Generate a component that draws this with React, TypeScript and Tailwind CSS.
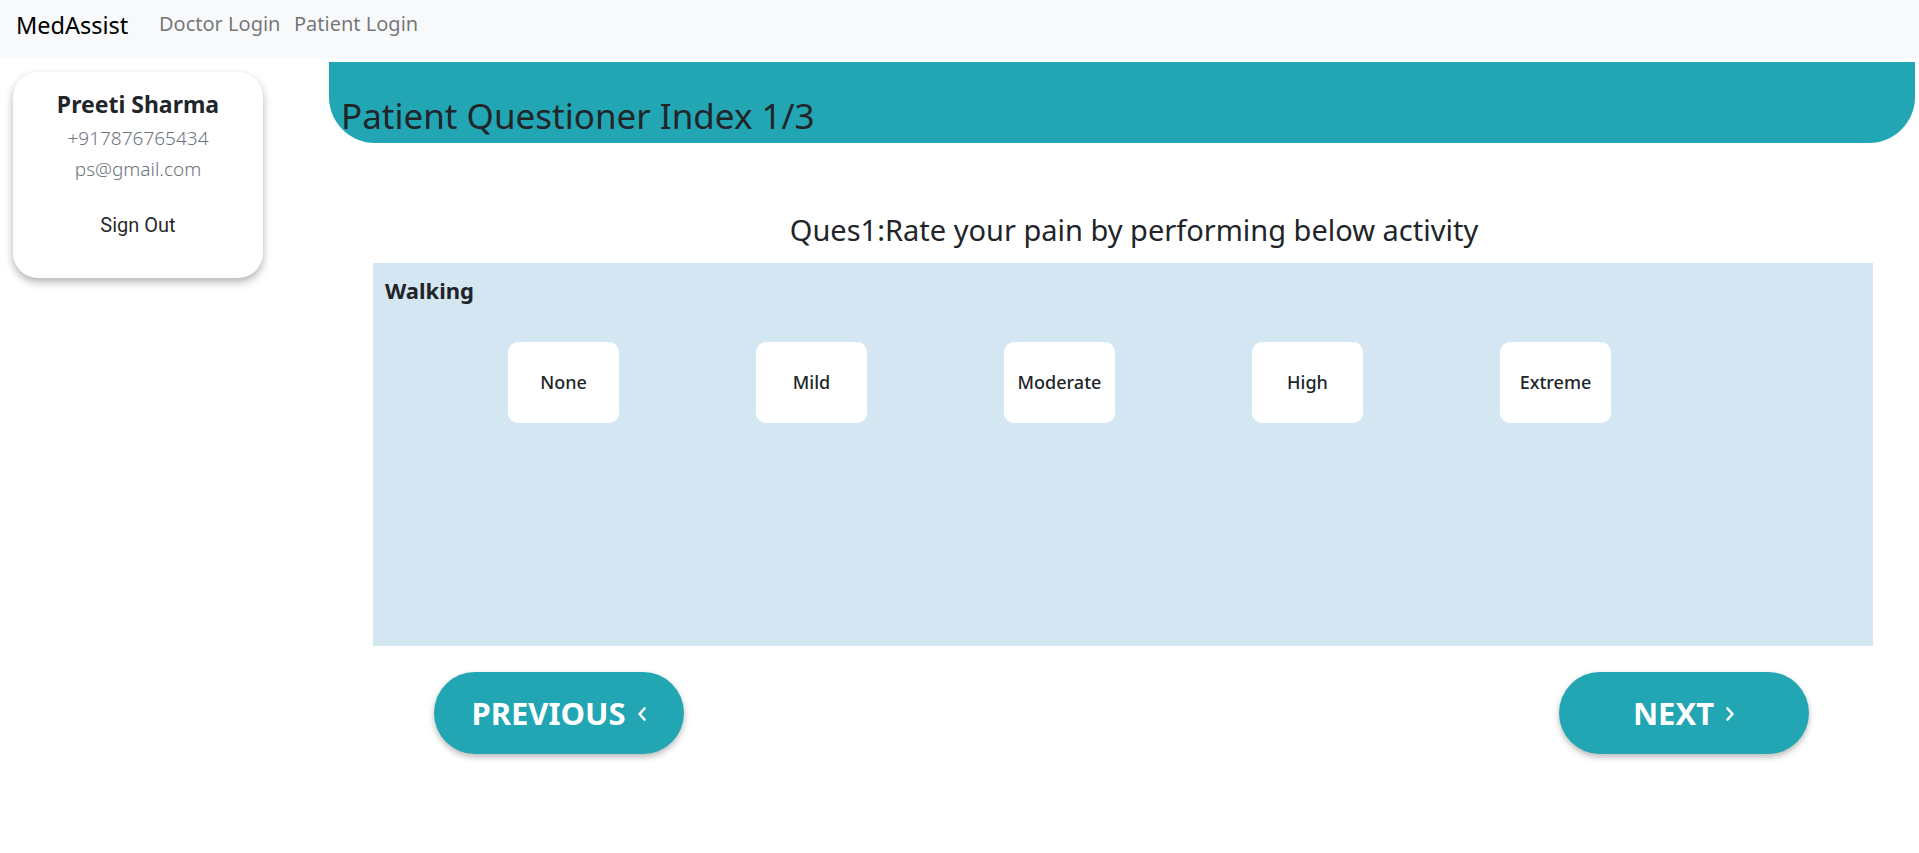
import React from "react";

const Chevron = ({ dir }: { dir: "left" | "right" }) => (
  <svg width="10" height="14" viewBox="0 0 10 14" fill="none" className="mt-[2px]">
    {dir === "left" ? (
      <polyline points="7.5,1.5 2.5,7 7.5,12.5" stroke="white" strokeWidth="2.6" strokeLinecap="round" strokeLinejoin="round" />
    ) : (
      <polyline points="2.5,1.5 7.5,7 2.5,12.5" stroke="white" strokeWidth="2.6" strokeLinecap="round" strokeLinejoin="round" />
    )}
  </svg>
);

const options = ["None", "Mild", "Moderate", "High", "Extreme"];

export default function App() {
  return (
    <div className="min-h-[853px] w-full bg-white font-['Noto_Sans',sans-serif] text-[#212529]">
      {/* Navbar */}
      <nav className="flex h-[58px] items-start bg-[#f8f9fa] pl-[16px] pt-[9px]">
        <div className="w-[143px] pt-[1px] text-[23.5px] leading-[30px] text-black">MedAssist</div>
        <a className="w-[135px] text-[20px] leading-[30px] text-[rgba(0,0,0,0.55)]">Doctor Login</a>
        <a className="text-[20px] leading-[30px] text-[rgba(0,0,0,0.55)]">Patient Login</a>
      </nav>

      <div className="flex">
        {/* Left column */}
        <div className="w-[329px] shrink-0 pl-[13px] pt-[14px]">
          <div className="flex w-[250px] flex-col items-center rounded-[25px] bg-white pb-[30px] pt-[17px] shadow-[0_4px_8px_rgba(0,0,0,0.3)]">
            <div className="text-[23px] font-bold leading-[30px] text-[#212529]">Preeti Sharma</div>
            <div className="mt-[5px] text-[19px] font-light leading-[28px] text-[#6c757d]">+917876765434</div>
            <div className="mt-[3px] text-[19px] font-light leading-[28px] text-[#6c757d]">ps@gmail.com</div>
            <button className="mt-[21px] px-[8px] py-[6px] font-['Roboto',sans-serif] text-[20px] leading-[31.5px] text-[rgba(0,0,0,0.87)]">
              Sign Out
            </button>
          </div>
        </div>

        {/* Right column */}
        <div className="mr-[4px] mt-[4px] flex-1">
          <div className="flex h-[81px] items-end rounded-b-[46px] bg-[#22a6b3] pb-[5px] pl-[12px]">
            <h2 className="text-[35px] leading-[44px] text-[#212529]">Patient Questioner Index 1/3</h2>
          </div>

          <div className="ml-[44px] w-[1500px]">
            <div className="mt-[70px] pl-[22px] text-center text-[29px] leading-[34px] text-[#212529]">
              Ques1:Rate your pain by performing below activity
            </div>

            <div className="mt-[16px] h-[383px] bg-[#d4e6f1] pl-[12px] pt-[13px]">
              <div className="text-[22px] font-bold leading-[28px] text-[#212529]">Walking</div>
              <div className="mt-[38px] flex gap-[137px] pl-[123px]">
                {options.map((o) => (
                  <div
                    key={o}
                    className="flex h-[81px] w-[111px] items-center justify-center rounded-[10px] bg-white text-[18px] font-medium text-[#212529]"
                  >
                    {o}
                  </div>
                ))}
              </div>
            </div>

            <div className="mt-[26px] flex justify-between pl-[61px] pr-[64px]">
              <button className="flex h-[82px] w-[250px] items-center justify-center gap-[11px] rounded-full bg-[#22a6b3] text-[31px] font-bold text-white shadow-[0_3px_6px_rgba(0,0,0,0.28)]">
                <span>PREVIOUS</span>
                <Chevron dir="left" />
              </button>
              <button className="flex h-[82px] w-[250px] items-center justify-center gap-[11px] rounded-full bg-[#22a6b3] text-[31px] font-bold text-white shadow-[0_3px_6px_rgba(0,0,0,0.28)]">
                <span>NEXT</span>
                <Chevron dir="right" />
              </button>
            </div>
          </div>
        </div>
      </div>
    </div>
  );
}
